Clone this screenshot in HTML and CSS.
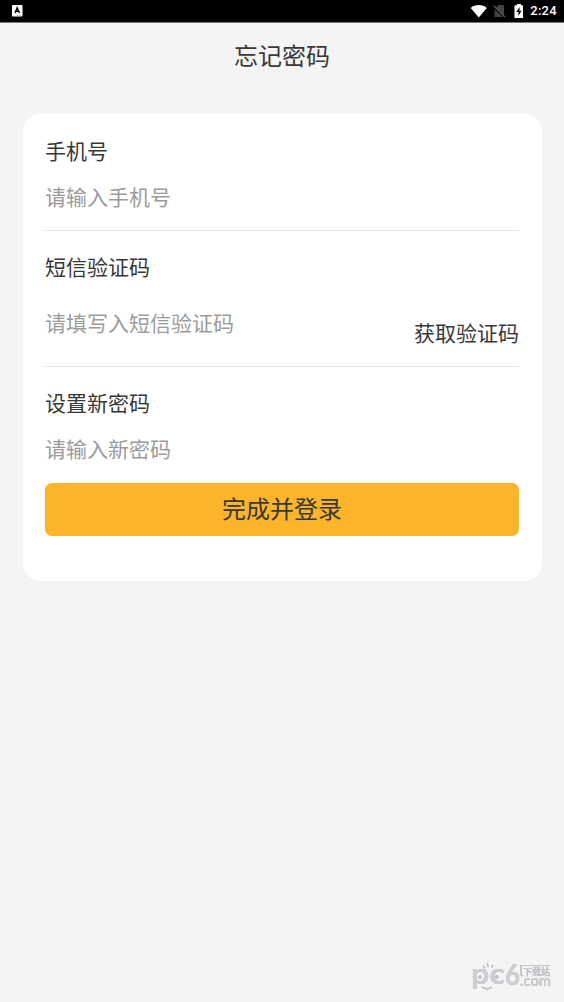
FILE: index.html
```html
<!DOCTYPE html>
<html lang="zh-CN">
<head>
    <meta charset="UTF-8">
    <meta name="viewport" content="width=device-width, initial-scale=1.0">
    <title>忘记密码</title>
    <link rel="stylesheet" href="styles.css">
</head>
<body>

    <!-- Status bar -->
    <div class="status-bar">
        <svg class="app-icon" width="11" height="12" viewBox="0 0 11 12">
            <rect width="10.5" height="11.5" rx="1" fill="#fff"/>
            <path d="M3 8 L5.2 2.8 L7.5 8 M3.8 6.3 H6.8" fill="none" stroke="#000" stroke-width="1.4"/>
            <path d="M5 10.3 H9" stroke="#777" stroke-width="0.7" stroke-dasharray="1.5 0.8"/>
        </svg>
        <div class="status-icons">
            <svg width="18" height="14" viewBox="0 0 18 14">
                <path d="M0.7 3.9 C5.2 0.1 12.3 0.1 16.8 3.9 L8.8 13.6 Z" fill="#fff"/>
            </svg>
            <svg class="sim" width="13" height="14" viewBox="0 0 13 14">
                <path d="M5 1 H11 V12 L3 4 Z M1.5 5.2 L10 13 H1.5 Z" fill="#424242"/>
                <path d="M0.7 1.7 L12 13" stroke="#555" stroke-width="1.3"/>
            </svg>
            <svg class="battery" width="10" height="14" viewBox="0 0 10 14">
                <path d="M3 0 H7 V1.3 H9 V14 H0.5 V1.3 H3 Z" fill="#fff"/>
                <path d="M5.5 3 L2.3 8 H4.4 V12 L7.5 6.8 H5.5 Z" fill="#000"/>
            </svg>
            <span class="time">2:24</span>
        </div>
    </div>

    <h1>忘记密码</h1>

    <form class="card">
        <div class="form-group">
            <label for="phone">手机号</label>
            <input type="tel" id="phone" placeholder="请输入手机号">
        </div>

        <div class="form-group code-group">
            <label for="code">短信验证码</label>
            <div class="code-row">
                <input type="text" id="code" placeholder="请填写入短信验证码">
                <button type="button" class="get-code">获取验证码</button>
            </div>
        </div>

        <div class="form-group last">
            <label for="password">设置新密码</label>
            <input type="password" id="password" placeholder="请输入新密码">
        </div>

        <button type="submit" class="submit">完成并登录</button>
    </form>

    <!-- Watermark -->
    <svg class="watermark" width="86" height="38" viewBox="0 0 86 38">
        <g class="mark">
            <text class="pc" x="1" y="26" textLength="34" lengthAdjust="spacingAndGlyphs">pc</text>
            <text class="six" x="35" y="27" textLength="15" lengthAdjust="spacingAndGlyphs">6</text>
            <text class="com" x="50" y="28" textLength="31" lengthAdjust="spacingAndGlyphs">.com</text>
        </g>
        <path d="M13 8 L15 10 M17 5.5 L18.5 9 M23 7 L21.5 9.5 M12 29 Q17 32.5 22 29" class="rays"/>
        <circle cx="10" cy="19" r="1.7" class="eye"/>
        <circle cx="27" cy="19" r="1.7" class="eye"/>
        <path d="M80 7.5 H51 V17 L53 18" class="tag"/>
        <text class="site" x="53" y="16.8" textLength="27" lengthAdjust="spacingAndGlyphs">下载站</text>
    </svg>

</body>
</html>
```

FILE: styles.css
```css
*, *::before, *::after {
    box-sizing: border-box;
    margin: 0;
    padding: 0;
}

body {
    font-family: 'Noto Sans CJK SC', sans-serif;
    background-color: #f4f4f4;
    color: #383838;
    min-height: 100vh;
    overflow: hidden;
}

/* Status bar */
.status-bar {
    display: flex;
    justify-content: space-between;
    align-items: center;
    height: 23px;
    padding: 0 7px 0 12px;
    background-color: #000;
    border-bottom: 1px solid #777;
}

.status-icons {
    display: flex;
    align-items: center;
}

.sim {
    margin-left: 5px;
}

.battery {
    margin-left: 8px;
}

.time {
    margin-left: 6px;
    font-family: Roboto, sans-serif;
    font-size: 13px;
    font-weight: 500;
    line-height: 22px;
    letter-spacing: 0.3px;
    color: #fff;
}

h1 {
    height: 91px;
    padding-top: 15px;
    font-size: 24px;
    font-weight: 400;
    line-height: 34px;
    text-align: center;
}

/* Form card */
.card {
    height: 467px;
    margin: 0 22.5px;
    padding: 21px 22.5px 0;
    background-color: #fff;
    border-radius: 18px;
}

.form-group {
    margin-bottom: 20px;
    border-bottom: 1px solid #e5e5e5;
}

.form-group:first-child {
    height: 96px;
}

.form-group.code-group {
    height: 116px;
}

.form-group.last {
    height: 96px;
    margin-bottom: 0;
    border-bottom: none;
}

label {
    display: block;
    margin-bottom: 16px;
    font-size: 21px;
    line-height: 30px;
}

input {
    display: block;
    width: 100%;
    height: 30px;
    border: none;
    outline: none;
    background: none;
    font-family: inherit;
    font-size: 21px;
    line-height: 30px;
    color: #383838;
}

input::placeholder {
    color: #9b9b9b;
    opacity: 1;
}

.code-row {
    display: flex;
    align-items: flex-start;
    padding-top: 10px;
}

.code-row input {
    flex: 1;
    min-width: 0;
}

button {
    border: none;
    font-family: inherit;
    color: #383838;
    cursor: pointer;
}

.get-code {
    margin-top: 10px;
    background: none;
    font-size: 21px;
    line-height: 30px;
}

.submit {
    display: block;
    width: 100%;
    height: 53px;
    padding-bottom: 3px;
    border-radius: 7px;
    background-color: #fcb42a;
    font-size: 24px;
    line-height: 34px;
}

/* Watermark */
.watermark {
    position: absolute;
    right: 8px;
    bottom: 6px;
    font-family: Lato, 'Noto Sans CJK SC', sans-serif;
    font-weight: 700;
    filter: drop-shadow(0.6px 0.7px 0 #a5a5ac);
}

.mark {
    fill: #cdcdd2;
}

.pc {
    font-size: 29px;
}

.six {
    font-size: 28px;
}

.com {
    font-size: 15px;
}

.rays {
    fill: none;
    stroke: #c3c3c8;
    stroke-width: 1.4;
}

.eye {
    fill: #c3c3c8;
}

.tag {
    fill: none;
    stroke: #c5c5ca;
    stroke-width: 1.2;
}

.site {
    font-size: 9px;
    fill: #c5c5ca;
}
```
